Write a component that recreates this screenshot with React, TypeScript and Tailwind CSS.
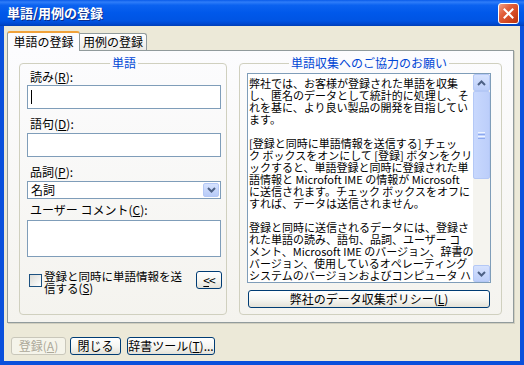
import React from "react";

const U = ({ children }: { children: React.ReactNode }) => (
  <span className="underline underline-offset-[1px]">{children}</span>
);

const btn =
  "h-[18px] rounded-[3px] border border-[#003C74] bg-[linear-gradient(to_bottom,#FFFFFF_0%,#F5F5F1_55%,#E4E2D8_100%)] text-black text-[12px] leading-[16px] flex items-center justify-center";

const Chevron = ({ up }: { up?: boolean }) => (
  <svg width="9" height="6" viewBox="0 0 9 6">
    <path
      d={up ? "M1 5 L4.5 1.5 L8 5" : "M1 1 L4.5 4.5 L8 1"}
      fill="none"
      stroke="#4D6185"
      strokeWidth="2"
    />
  </svg>
);

const lines = [
  "弊社では、お客様が登録された単語を収集",
  "し、匿名のデータとして統計的に処理し、そ",
  "れを基に、より良い製品の開発を目指してい",
  "ます。",
  "",
  "[登録と同時に単語情報を送信する] チェッ",
  "ク ボックスをオンにして [登録] ボタンをクリ",
  "ックすると、単語登録と同時に登録された単",
  "語情報と Microfoft IME の情報が Microsoft",
  "に送信されます。チェック ボックスをオフに",
  "すれば、データは送信されません。",
  "",
  "登録と同時に送信されるデータには、登録さ",
  "れた単語の読み、語句、品詞、ユーザー コ",
  "メント、Microsoft IME のバージョン、辞書の",
  "バージョン、使用しているオペレーティング",
  "システムのバージョンおよびコンピュータ ハ",
];

const scrollBtn =
  "h-[17px] shrink-0 rounded-[2px] border border-[#B4C8F6] bg-[linear-gradient(to_bottom,#D6E2FE,#BCCEF9)] flex items-center justify-center";

export default function App() {
  return (
    <div className="w-[524px] h-[365px] flex flex-col overflow-hidden select-none font-['Noto_Sans_CJK_JP','Noto_Sans',sans-serif] text-[12px] text-black">
      {/* Title bar */}
      <div className="h-[26px] shrink-0 flex items-center pl-[7px] pr-[5px] bg-[linear-gradient(to_bottom,#0A5BE9_0%,#2F7DF9_8%,#0B62F0_20%,#0058EA_50%,#0054E3_80%,#0048D0_92%,#003FB5_100%)]">
        <span className="flex-1 text-white font-bold text-[13px] leading-[16px] [text-shadow:1px_1px_0_#0A2C8C]">
          単語/用例の登録
        </span>
        <div className="w-[21px] h-[21px] rounded-[3px] border border-white bg-[linear-gradient(135deg,#F2A088_0%,#E2603C_35%,#D0451F_70%,#B8330F_100%)] flex items-center justify-center">
          <svg width="11" height="11" viewBox="0 0 11 11">
            <path d="M1.5 1.5 L9.5 9.5 M9.5 1.5 L1.5 9.5" stroke="white" strokeWidth="2" strokeLinecap="square" />
          </svg>
        </div>
      </div>

      {/* Client */}
      <div className="flex-1 flex flex-col bg-[#ECE9D8] border-x-4 border-b-4 border-[#0A50DC] pt-[5px]">
        {/* Tabs */}
        <div className="h-[19px] flex items-end pl-[3px]">
          <div className="relative z-10 -mb-[1px] w-[73px] h-[20px] border-x border-[#919B9C] border-t-[2px] border-t-[#F0A23A] rounded-t-[3px] bg-[#FCFCFE] flex items-center justify-center leading-[14px]">
            単語の登録
          </div>
          <div className="w-[67px] h-[17px] border-t border-r border-[#919B9C] rounded-tr-[3px] bg-[linear-gradient(to_bottom,#FFFFFF,#ECEBE6)] flex items-center justify-center leading-[14px]">
            用例の登録
          </div>
        </div>

        {/* Panel */}
        <div className="ml-[3px] mr-[6px] h-[273px] border border-[#919B9C] bg-[linear-gradient(to_bottom,#FCFCFE,#F4F3EE)] flex pt-[6px] pl-[11px] pr-[11px] gap-[12px] shadow-[1px_1px_0_#D0CEBF]">
          {/* Left group */}
          <fieldset className="w-[208px] min-w-0 shrink-0 h-[258px] border border-[#D0D0BF] rounded-[4px] pl-[7px] pr-[5px]">
            <legend className="mx-auto px-[2px] text-[#0046D5] text-[12px] leading-[12px]">単語</legend>
            <div className="flex flex-col">
              <div className="mt-[1px] pl-[3px] h-[14px] leading-[14px]">
                読み(<U>R</U>):
              </div>
              <div className="mt-[1px] h-[24px] border border-[#7F9DB9] bg-white flex items-center pl-[3px]">
                <div className="w-[1px] h-[14px] bg-black" />
              </div>
              <div className="mt-[8px] pl-[3px] h-[14px] leading-[14px]">
                語句(<U>D</U>):
              </div>
              <div className="mt-[2px] h-[24px] border border-[#7F9DB9] bg-white" />
              <div className="mt-[8px] pl-[3px] h-[14px] leading-[14px]">
                品詞(<U>P</U>):
              </div>
              <div className="mt-[2px] h-[18px] border border-[#7F9DB9] bg-white flex items-stretch p-[1px]">
                <div className="flex-1 pl-[2px] leading-[14px]">名詞</div>
                <div className="w-[16px] rounded-[2px] border border-[#B4C8F6] bg-[linear-gradient(to_bottom,#D6E2FE,#B8CBF8)] flex items-center justify-center">
                  <Chevron />
                </div>
              </div>
              <div className="mt-[4px] pl-[3px] h-[14px] leading-[14px]">
                ユーザー コメント(<U>C</U>):
              </div>
              <div className="mt-[3px] h-[37px] border border-[#7F9DB9] bg-white" />
              <div className="mt-[14px] flex items-start">
                <div className="ml-[2px] mt-[3px] w-[13px] h-[13px] shrink-0 border border-[#1C5180] bg-[linear-gradient(135deg,#DCDCD7,#FFFFFF)]" />
                <div className="ml-[2px] -mt-[1px] text-[11.5px] leading-[12px] whitespace-nowrap">
                  <div>登録と同時に単語情報を送</div>
                  <div>
                    信する(<U>S</U>)
                  </div>
                </div>
                <div className={btn + " ml-auto -mr-[1px] w-[26px] shrink-0"}>
                  <span className="tracking-[-1px]">
                    <U>&lt;</U>&lt;
                  </span>
                </div>
              </div>
            </div>
          </fieldset>

          {/* Right group */}
          <fieldset className="w-[263px] min-w-0 shrink-0 h-[258px] border border-[#D0D0BF] rounded-[4px] pl-[7px] pr-[10px]">
            <legend className="mx-auto px-[2px] text-[#0046D5] text-[12px] leading-[12px]">
              単語収集へのご協力のお願い
            </legend>
            <div className="flex flex-col">
              <div className="mt-[4px] w-[244px] h-[210px] border border-[#7F9DB9] bg-white flex">
                <div className="w-[225px] shrink-0 overflow-hidden pl-[1px] pt-[3px] text-[11px] leading-[12px]">
                  {lines.map((l, i) => (
                    <div key={i} className="h-[12px] whitespace-nowrap">
                      {l}
                    </div>
                  ))}
                </div>
                <div className="w-[17px] shrink-0 flex flex-col bg-[#F5F4EF]">
                  <div className={scrollBtn}>
                    <Chevron up />
                  </div>
                  <div className="h-[88px] shrink-0 rounded-[2px] border border-[#B4C8F6] bg-[linear-gradient(to_right,#C8D8FD,#BCCEFA)] flex flex-col items-center justify-center gap-[1px]">
                    <div className="w-[7px] h-[1px] bg-[#EEF4FF]" />
                    <div className="w-[7px] h-[1px] bg-[#8CA9F0]" />
                    <div className="w-[7px] h-[1px] bg-[#EEF4FF]" />
                    <div className="w-[7px] h-[1px] bg-[#8CA9F0]" />
                  </div>
                  <div className="flex-1" />
                  <div className={scrollBtn}>
                    <Chevron />
                  </div>
                </div>
              </div>
              <div className={btn + " mt-[7px] ml-[1px] w-[242px]"}>
                弊社のデータ収集ポリシー(<U>L</U>)
              </div>
            </div>
          </fieldset>
        </div>

        {/* Bottom buttons */}
        <div className="mt-[14px] pl-[7px] flex">
          <div className="h-[18px] w-[55px] rounded-[3px] border border-[#C9C7BA] bg-[#F5F4EA] text-[#ACA899] leading-[16px] flex items-center justify-center">
            登録(<U>A</U>)
          </div>
          <div className={btn + " ml-[4px] w-[51px]"}>閉じる</div>
          <div className={btn + " ml-[6px] w-[88px]"}>
            辞書ツール(<U>T</U>)...
          </div>
        </div>
      </div>
    </div>
  );
}
